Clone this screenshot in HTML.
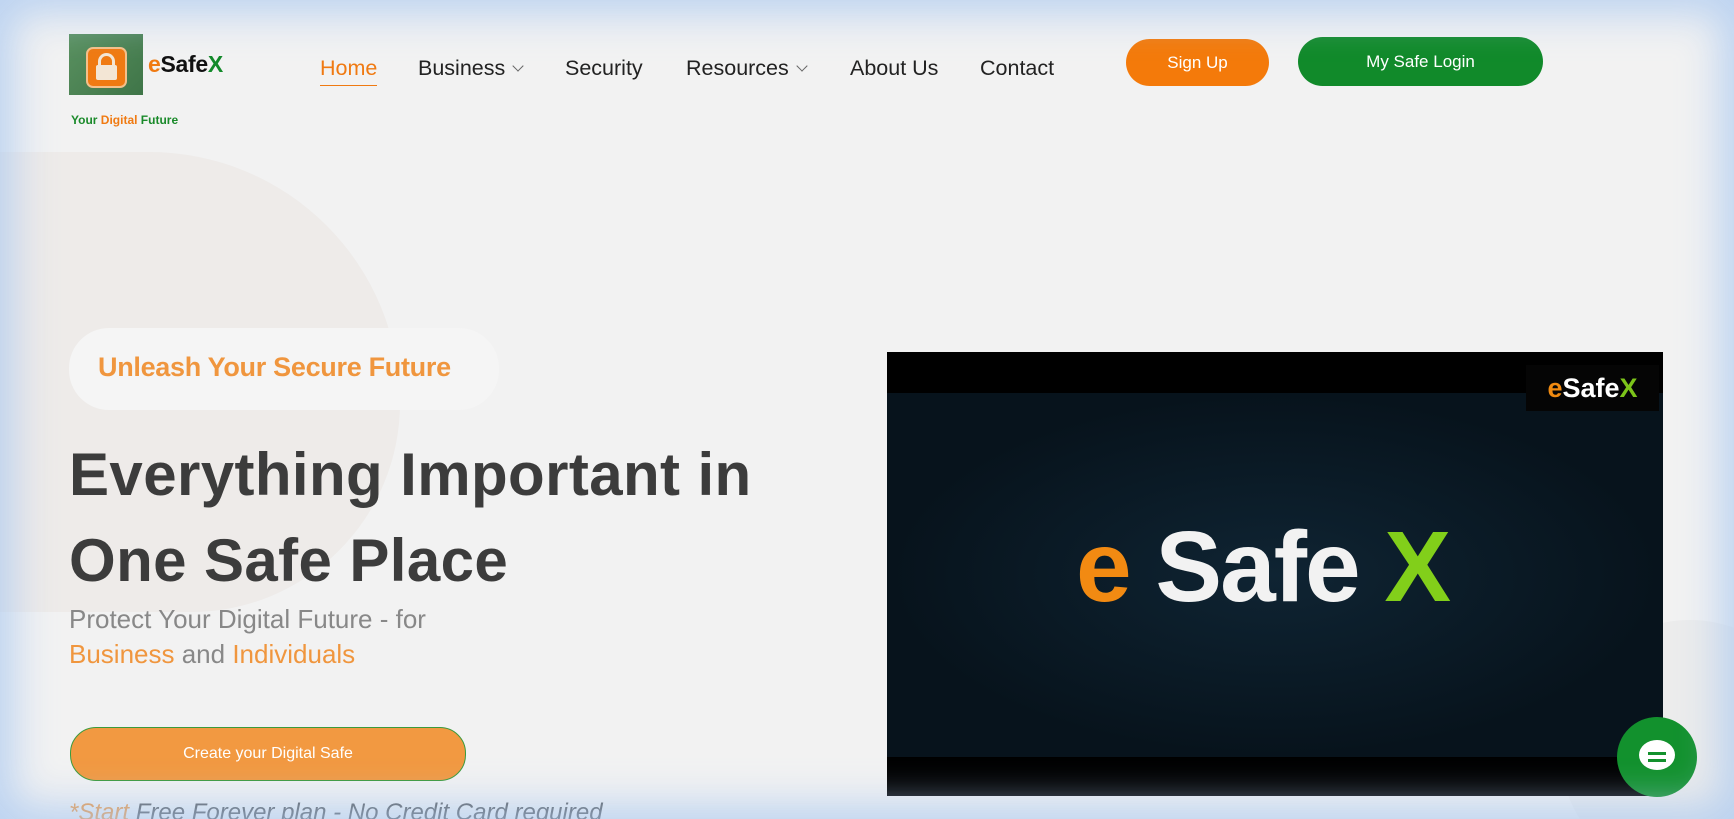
<!DOCTYPE html>
<html style="overflow:hidden"><head><meta charset="utf-8"><style>
*{margin:0;padding:0;box-sizing:border-box}
html,body{width:1734px;height:819px;overflow:hidden}
body{background:#f2f2f2;font-family:"Liberation Sans",sans-serif}
#w{position:relative;width:1734px;height:819px;overflow:hidden;background:#f2f2f2}
.edge{position:absolute;inset:0;pointer-events:none;box-shadow:inset 0 0 40px 14px rgba(170,200,240,.75)}
.abs{position:absolute}
.nav a{position:absolute;top:56px;font-size:21.5px;color:#222;text-decoration:none;white-space:nowrap}
.chev{display:inline-block;width:8px;height:8px;border-right:1.5px solid #666;border-bottom:1.5px solid #666;transform:rotate(45deg);margin-left:9px;position:relative;top:-5px}
.btn{position:absolute;color:#fff;font-size:17px;display:flex;align-items:center;justify-content:center;border-radius:26px}
</style></head><body><div id="w">
<div class="abs" style="left:-60px;top:152px;width:460px;height:460px;border-radius:0 60% 50% 0;background:#ece9e6;opacity:.8"></div>
<div class="abs" style="left:1560px;top:620px;width:260px;height:260px;border-radius:50%;background:#ececec"></div>

<div class="abs" style="left:69px;top:34px;width:74px;height:61px;background:linear-gradient(135deg,#5a9160,#3f7548)"></div>
<div class="abs" style="left:86px;top:47px;width:41px;height:41px;border-radius:7px;background:#f07a12;border:2px solid #f5c08a"></div>
<div class="abs" style="left:98px;top:53px;width:17px;height:14px;border:3px solid #f3e6d5;border-bottom:none;border-radius:9px 9px 0 0"></div>
<div class="abs" style="left:96px;top:65px;width:21px;height:15px;background:#f3e6d5;border-radius:2px"></div>
<div class="abs" style="left:148px;top:51px;font-size:23px;font-weight:bold;letter-spacing:-.3px"><span style="color:#f07a12">e</span><span style="color:#111">Safe</span><span style="color:#138a2a">X</span></div>
<div class="abs" style="left:71px;top:113px;font-size:12px;font-weight:bold;color:#1a8a2a">Your <span style="color:#f07a12">Digital</span> Future</div>

<div class="nav">
<a style="left:320px;color:#f07a12;border-bottom:1.5px solid #f07a12;padding-bottom:4px">Home</a>
<a style="left:418px">Business<span class="chev"></span></a>
<a style="left:565px">Security</a>
<a style="left:686px">Resources<span class="chev"></span></a>
<a style="left:850px">About Us</a>
<a style="left:980px">Contact</a>
</div>
<div class="btn" style="left:1126px;top:39px;width:143px;height:47px;background:#f47a0a">Sign Up</div>
<div class="btn" style="left:1298px;top:37px;width:245px;height:49px;background:#118a2a">My Safe Login</div>

<div class="abs" style="left:69px;top:328px;width:430px;height:82px;border-radius:40px;background:#f5f5f5"></div>
<div class="abs" style="left:98px;top:352px;font-size:27px;font-weight:bold;color:#f0963e;letter-spacing:-.3px">Unleash Your Secure Future</div>
<div class="abs" style="left:69px;top:432px;font-size:60px;font-weight:bold;color:#3c3c3c;line-height:86px;letter-spacing:.4px">Everything Important in<br>One Safe Place</div>
<div class="abs" style="left:69px;top:602px;font-size:26px;color:#888;line-height:35px">Protect Your Digital Future - for<br><span style="color:#f0963e">Business</span> and <span style="color:#f0963e">Individuals</span></div>
<div class="btn" style="left:70px;top:727px;width:396px;height:54px;background:#f29941;border:1px solid #3c9a3c;font-size:16px">Create your Digital Safe</div>
<div class="abs" style="left:69px;top:799px;font-size:24px;font-style:italic;color:#555"><span style="color:#f0963e">*Start</span> Free Forever plan - No Credit Card required</div>

<div class="abs" style="left:887px;top:352px;width:776px;height:444px;background:#000"></div>
<div class="abs" style="left:887px;top:393px;width:776px;height:364px;background:radial-gradient(ellipse at 50% 50%,#0f2433,#07131c 70%)"></div>
<div class="abs" style="left:1526px;top:365px;width:133px;height:46px;background:#050505;font-size:27px;font-weight:bold;color:#fff;text-align:center;line-height:46px"><span style="color:#f08a10">e</span>Safe<span style="color:#7cc41a">X</span></div>
<div class="abs" style="left:1076px;top:512px;font-size:100px;font-weight:bold;color:#f2f2f2;letter-spacing:-2px;line-height:110px"><span style="color:#f28a12">e</span> Safe <span style="color:#82cf1a">X</span></div>

<div class="abs" style="left:1617px;top:717px;width:80px;height:80px;border-radius:50%;background:#12912d"></div>
<div class="abs" style="left:1639px;top:740px;width:36px;height:30px;border-radius:50%;background:#fff"></div>
<div class="abs" style="left:1648px;top:752px;width:18px;height:3px;background:#12912d"></div>
<div class="abs" style="left:1648px;top:759px;width:18px;height:3px;background:#12912d"></div>
<div class="edge"></div>
</div></body></html>
